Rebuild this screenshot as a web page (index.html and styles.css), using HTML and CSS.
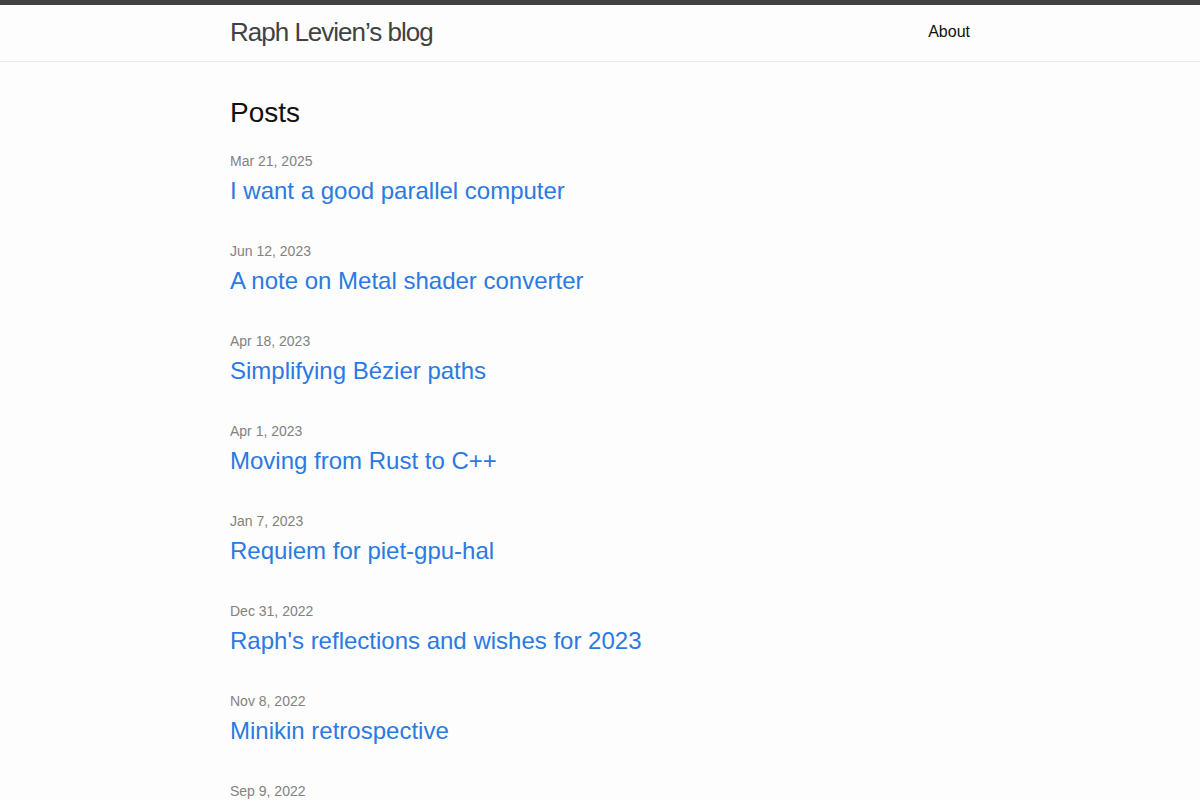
FILE: index.html
```html
<!DOCTYPE html>
<html lang="en">
<head>
  <meta charset="UTF-8">
  <meta name="viewport" content="width=device-width, initial-scale=1.0">
  <title>Raph Levien’s blog</title>
  <link rel="stylesheet" href="styles.css">
</head>
<body>
  <header class="site-header">
    <div class="wrapper header-row">
      <a class="site-title" href="#">Raph Levien’s blog</a>
      <nav class="site-nav">
        <a class="page-link" href="#">About</a>
      </nav>
    </div>
  </header>

  <main class="page-content">
    <div class="wrapper">
      <h2 class="post-list-heading">Posts</h2>
      <ul class="post-list">
        <li>
          <span class="post-meta">Mar 21, 2025</span>
          <h3><a class="post-link" href="#">I want a good parallel computer</a></h3>
        </li>
        <li>
          <span class="post-meta">Jun 12, 2023</span>
          <h3><a class="post-link" href="#">A note on Metal shader converter</a></h3>
        </li>
        <li>
          <span class="post-meta">Apr 18, 2023</span>
          <h3><a class="post-link" href="#">Simplifying Bézier paths</a></h3>
        </li>
        <li>
          <span class="post-meta">Apr 1, 2023</span>
          <h3><a class="post-link" href="#">Moving from Rust to C++</a></h3>
        </li>
        <li>
          <span class="post-meta">Jan 7, 2023</span>
          <h3><a class="post-link" href="#">Requiem for piet-gpu-hal</a></h3>
        </li>
        <li>
          <span class="post-meta">Dec 31, 2022</span>
          <h3><a class="post-link" href="#">Raph's reflections and wishes for 2023</a></h3>
        </li>
        <li>
          <span class="post-meta">Nov 8, 2022</span>
          <h3><a class="post-link" href="#">Minikin retrospective</a></h3>
        </li>
        <li>
          <span class="post-meta">Sep 9, 2022</span>
          <h3><a class="post-link" href="#">Fast 2D rendering on GPU</a></h3>
        </li>
      </ul>
    </div>
  </main>
</body>
</html>
```

FILE: styles.css
```css
body {
  margin: 0;
  padding: 0;
  font-family: "Liberation Sans", Arial, Helvetica, sans-serif;
  font-size: 16px;
  line-height: 1.5;
  color: #111;
  background-color: #fdfdfd;
}
a {
  text-decoration: none;
}
.wrapper {
  max-width: 740px;
  margin: 0 auto;
  padding: 0 30px;
}
.site-header {
  border-top: 5px solid #424242;
  border-bottom: 1px solid #e8e8e8;
  min-height: 56px;
}
.header-row {
  display: flex;
  justify-content: space-between;
  align-items: flex-start;
}
.site-title {
  font-size: 26px;
  font-weight: 300;
  line-height: 54px;
  letter-spacing: -1px;
  color: #424242;
}
.site-nav {
  line-height: 54px;
}
.page-link {
  color: #111;
}
.page-content {
  padding: 30px 0;
}
.post-list-heading {
  font-size: 28px;
  font-weight: 400;
  margin: 0 0 15px;
}
.post-list {
  list-style: none;
  margin: 0;
  padding: 0;
}
.post-list li {
  margin-bottom: 30px;
}
.post-meta {
  font-size: 14px;
  color: #828282;
}
.post-list h3 {
  margin: 0;
  font-size: 24px;
  font-weight: 400;
  line-height: 36px;
}
.post-link {
  color: #2a7ae2;
}
```
